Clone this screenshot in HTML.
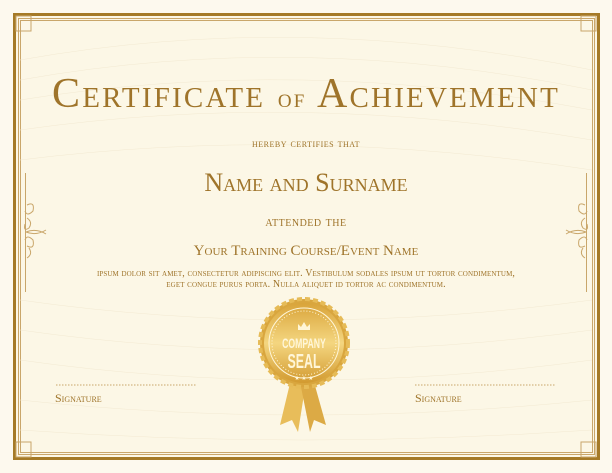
<!DOCTYPE html>
<html><head><style>
html,body{margin:0;padding:0}
body{width:612px;height:473px;background:#fdf9ee;position:relative;overflow:hidden;font-family:"Liberation Serif",serif;color:#9f742a}
.a{position:absolute}
.c{position:absolute;left:0;width:612px;text-align:center;white-space:nowrap}
</style></head><body>
<div class="a" style="left:13px;top:13px;width:581px;height:441px;border:3px solid #a57a27;background:#fcf7e6"></div>
<div class="a" style="left:18px;top:18px;width:575px;height:435px;border:1px solid #c9a66a"></div>
<div class="a" style="left:20px;top:20px;width:571px;height:431px;border:1px solid #c9a66a"></div>
<svg class="a" style="left:0;top:0" width="612" height="473">
<g fill="none" stroke="#f3ead2" stroke-width="0.5">
<path d="M20 60 Q300 10 592 70"/><path d="M20 80 Q300 30 592 90"/><path d="M20 100 Q300 55 592 110"/>
<path d="M20 130 Q300 90 592 140"/><path d="M20 160 Q300 125 592 170"/>
<path d="M20 300 Q300 340 592 300"/><path d="M20 330 Q300 370 592 330"/><path d="M20 360 Q300 400 592 360"/>
<path d="M20 400 Q300 430 592 400"/><path d="M20 430 Q300 450 592 430"/>
</g>
<g fill="none" stroke="#c9a66a" stroke-width="1">
<rect x="16" y="16" width="15" height="15"/><rect x="581" y="16" width="15" height="15"/>
<rect x="16" y="442" width="15" height="15"/><rect x="581" y="442" width="15" height="15"/>
<line x1="25.5" y1="173" x2="25.5" y2="292"/><line x1="586.5" y1="173" x2="586.5" y2="292"/>
<path d="M27 205 q8 -4 6 6 q-6 6 -8 0 M27 218 q6 4 2 10 q-6 4 -4 -4 M26 232 q10 -4 20 2 M26 232 q10 4 20 -2 M27 246 q8 4 6 -6 q-6 -6 -8 0 M27 258 q6 -4 2 -10"/>
<path d="M585 205 q-8 -4 -6 6 q6 6 8 0 M585 218 q-6 4 -2 10 q6 4 4 -4 M586 232 q-10 -4 -20 2 M586 232 q-10 4 -20 -2 M585 246 q-8 4 -6 -6 q6 -6 8 0 M585 258 q-6 -4 -2 -10"/>
</g>
<g stroke="#c9a66a" stroke-dasharray="1.5 1.5"><line x1="56" y1="385" x2="196" y2="385"/><line x1="415" y1="385" x2="555" y2="385"/></g>
<defs><linearGradient id="g" x1="0" y1="0" x2="0" y2="1"><stop offset="0" stop-color="#d9a43a"/><stop offset=".5" stop-color="#f4d680"/><stop offset="1" stop-color="#d29a30"/></linearGradient></defs>
<path d="M292 375 L280 425 L292 420 L298 432 L306 382Z" fill="#e8bd5a"/>
<path d="M312 375 L326 425 L314 420 L310 432 L300 382Z" fill="#dcaa45"/>
<circle cx="304" cy="343" r="44" fill="#d9a63e" stroke="#e6bb57" stroke-width="4" stroke-dasharray="5 3"/>
<circle cx="304" cy="343" r="40" fill="url(#g)"/>
<circle cx="304" cy="343" r="35" fill="none" stroke="#fff6d8" stroke-width="1"/>
<circle cx="304" cy="343" r="32" fill="none" stroke="#fff6d8" stroke-width="1" stroke-dasharray="1 2"/>
<path d="M298 330 l0 -6 l3 3 l3 -5 l3 5 l3 -3 l0 6z" fill="#fff6d8"/>
<g transform="translate(304 0) scale(0.62 1)">
<text x="0" y="348" font-family="Liberation Sans,sans-serif" font-size="14" font-weight="bold" fill="#fff6d8" text-anchor="middle">COMPANY</text>
<text x="0" y="368" font-family="Liberation Sans,sans-serif" font-size="20" font-weight="bold" fill="#fff6d8" text-anchor="middle">SEAL</text>
</g>
<text x="304" y="380" font-size="6" fill="#fff6d8" text-anchor="middle">★ ★ ★</text>
</svg>
<div class="c" style="top:70px;font-size:42px;font-variant:small-caps;letter-spacing:2.2px">Certificate <span style="font-size:27px">of</span> Achievement</div>
<div class="c" style="top:136px;font-size:12px;font-variant:small-caps;letter-spacing:.5px">hereby certifies that</div>
<div class="c" style="top:168px;font-size:26px;font-variant:small-caps">Name and Surname</div>
<div class="c" style="top:215px;font-size:14px;font-variant:small-caps;letter-spacing:.5px">attended the</div>
<div class="c" style="top:243px;font-size:15px;font-variant:small-caps">Your Training Course/Event Name</div>
<div class="c" style="top:268px;font-size:10px;font-variant:small-caps;line-height:11px;letter-spacing:.1px">ipsum dolor sit amet, consectetur adipiscing elit. Vestibulum sodales ipsum ut tortor condimentum,<br>eget congue purus porta. Nulla aliquet id tortor ac condimentum.</div>
<div class="a" style="left:55px;top:391px;font-size:12px;font-variant:small-caps">Signature</div>
<div class="a" style="left:415px;top:391px;font-size:12px;font-variant:small-caps">Signature</div>
</body></html>
